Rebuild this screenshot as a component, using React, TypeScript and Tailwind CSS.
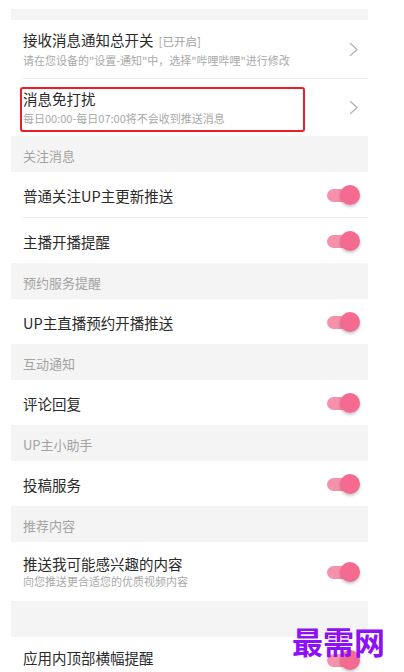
const font = { fontFamily: '"Noto Sans CJK SC", "Noto Sans", sans-serif' };

function Chevron() {
  return (
    <svg width="10" height="15" viewBox="0 0 10 15" fill="none" className="shrink-0">
      <path d="M1.5 1.5L8 7.5L1.5 13.5" stroke="#b0b0b0" strokeWidth="1.2" strokeLinecap="round" strokeLinejoin="round" />
    </svg>
  );
}

function Toggle() {
  return (
    <div className="relative h-[20px] w-[33px] shrink-0">
      <div className="absolute left-0 top-[4px] h-[13px] w-[28px] rounded-full bg-[#f591ab]" />
      <div className="absolute right-0 top-0 h-[20px] w-[20px] rounded-full bg-[#f46a90] shadow-[0_2px_3px_rgba(0,0,0,0.22)]" />
    </div>
  );
}

function Header({ label }: { label: string }) {
  return (
    <div className="flex h-[36px] items-center bg-[#f4f4f4] pl-[12px] pt-[3px] text-[13px] text-[#a3a3a3]">
      {label}
    </div>
  );
}

function SwitchRow({ label }: { label: string }) {
  return (
    <div className="flex h-[45px] items-center justify-between pl-[12px] pr-[8px]">
      <span className="pt-[2px] text-[14.5px] text-[#2a2a2a]">{label}</span>
      <Toggle />
    </div>
  );
}

function Divider() {
  return <div className="ml-[12px] h-px bg-[#ececec]" />;
}

export default function App() {
  return (
    <div className="h-[672px] w-[404px] overflow-hidden bg-white" style={font}>
      <div className="ml-[11px] w-[357px]">
        <div className="h-[9px]" />
        <div className="h-[11px] bg-[#f4f4f4]" />

        {/* master switch */}
        <div className="flex h-[58px] items-center justify-between pl-[12px] pr-[9px]">
          <div className="flex flex-col">
            <div className="flex items-baseline gap-[5px] leading-[20px]">
              <span className="text-[14.5px] text-[#2a2a2a]">接收消息通知总开关</span>
              <span className="text-[11.5px] text-[#a3a3a3]">[已开启]</span>
            </div>
            <span className="mt-[1px] text-[11px] leading-[16px] text-[#a9a9a9]">
              请在您设备的"设置-通知"中，选择"哔哩哔哩"进行修改
            </span>
          </div>
          <Chevron />
        </div>
        <Divider />

        {/* do not disturb, with red annotation box */}
        <div className="relative flex h-[57px] items-center justify-between pl-[12px] pr-[9px]">
          <div className="flex flex-col">
            <span className="text-[14.5px] leading-[20px] text-[#2a2a2a]">消息免打扰</span>
            <span className="mt-[1px] text-[11px] leading-[16px] text-[#a9a9a9]">
              每日00:00-每日07:00将不会收到推送消息
            </span>
          </div>
          <Chevron />
          <div className="pointer-events-none absolute left-[9px] top-[8px] h-[45px] w-[285px] rounded-[3px] border-2 border-[#ee1c24]" />
        </div>

        <Header label="关注消息" />
        <SwitchRow label="普通关注UP主更新推送" />
        <Divider />
        <SwitchRow label="主播开播提醒" />

        <Header label="预约服务提醒" />
        <SwitchRow label="UP主直播预约开播推送" />

        <Header label="互动通知" />
        <SwitchRow label="评论回复" />

        <Header label="UP主小助手" />
        <SwitchRow label="投稿服务" />

        <Header label="推荐内容" />
        <div className="flex h-[59px] items-center justify-between pl-[12px] pr-[8px]">
          <div className="flex flex-col">
            <span className="text-[14.5px] leading-[20px] text-[#2a2a2a]">推送我可能感兴趣的内容</span>
            <span className="mt-[-1px] text-[11px] leading-[16px] text-[#a9a9a9]">
              向您推送更合适您的优质视频内容
            </span>
          </div>
          <Toggle />
        </div>

        <div className="h-[36px] bg-[#f4f4f4]" />
        <div className="relative flex h-[45px] items-center justify-between pl-[12px] pr-[8px]">
          <span className="-mt-[4px] text-[14.5px] text-[#2a2a2a]">应用内顶部横幅提醒</span>
          <Toggle />
          {/* site watermark */}
          <span className="absolute right-[-17px] top-[-12px] text-[31px] font-bold leading-none text-[#8d10f7]">
            最需网
          </span>
        </div>
      </div>
    </div>
  );
}
